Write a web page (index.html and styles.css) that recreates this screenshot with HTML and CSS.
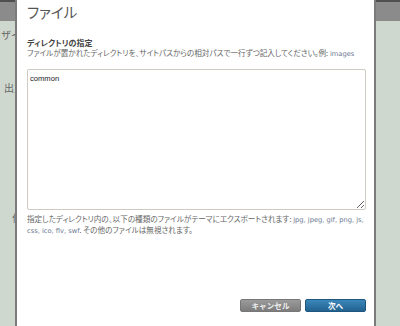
FILE: index.html
```html
<!DOCTYPE html>
<html>

<head>
    <title>ファイル</title>
    <link rel="stylesheet" href="styles.css">
</head>

<body>
    <div class="page">
        <div class="topbar"></div>
        <div class="subbar"></div>
        <div class="side">
            <p class="side-label first">ザイ</p>
            <p class="side-label second">出力</p>
            <p class="side-label third">作</p>
        </div>
    </div>

    <div class="dialog">
        <h1 class="dialog-title">ファイル</h1>

        <div class="dialog-body">
            <h2>ディレクトリの指定</h2>
            <p class="help">ファイルが置かれたディレクトリを、サイトパスからの相対パスで一行ずつ記入してください。例: <span class="code">images</span></p>
            <textarea class="dirs">common</textarea>
            <p class="note">指定したディレクトリ内の、以下の種類のファイルがテーマにエクスポートされます: <span class="code">jpg, jpeg, gif, png, js,</span><br>
                <span class="code">css, ico, flv, swf</span>. その他のファイルは無視されます。</p>
        </div>

        <div class="dialog-buttons">
            <button class="btn cancel">キャンセル</button>
            <button class="btn next">次へ</button>
        </div>
    </div>
</body>

</html>
```

FILE: styles.css
```css
body {
    margin: 0;
    font-family: "Noto Sans CJK JP", sans-serif;
    background-color: #cfd8ce;
    overflow: hidden;
}

.page {
    height: 326px;
}

.topbar {
    height: 2px;
    background-color: #4f4f4f;
}

.subbar {
    height: 19px;
    background-color: #8b8b8b;
}

.side {
    width: 15px;
    overflow: hidden;
}

.side-label {
    margin: 0;
    font-size: 10px;
    line-height: 12px;
    color: #666;
    white-space: nowrap;
}

.side-label.first {
    margin-top: 8px;
    margin-left: 1px;
}

.side-label.second {
    margin-top: 41px;
    margin-left: 4px;
}

.side-label.third {
    margin-top: 118px;
    margin-left: 12px;
}

/* overlay dialog */
.dialog {
    position: absolute;
    top: 0;
    left: 15px;
    width: 361px;
    height: 326px;
    background-color: #fff;
    border-left: 2px solid #7b7b7b;
    border-right: 2px solid #7b7b7b;
    display: flex;
    flex-direction: column;
    padding: 0 8px 14px 10px;
    box-sizing: border-box;
    font-feature-settings: "palt";
}

.dialog-title {
    margin: 0;
    padding-top: 3px;
    height: 24px;
    box-sizing: border-box;
    font-size: 14.5px;
    line-height: 18px;
    font-weight: normal;
    color: #555;
}

.dialog-body h2 {
    margin: 14px 0 0;
    font-size: 8px;
    line-height: 10px;
    font-weight: bold;
    color: #444;
}

.help {
    margin: 0;
    font-size: 7.6px;
    line-height: 10px;
    color: #666;
    white-space: nowrap;
}

.code {
    font-family: "DejaVu Sans", sans-serif;
    font-size: 6.7px;
    color: #6b7890;
}

.dirs {
    display: block;
    width: 339px;
    height: 141px;
    margin-top: 10px;
    box-sizing: border-box;
    padding: 4px 2px;
    border: 1px solid #cfcac4;
    border-radius: 2px;
    font-family: "Liberation Sans", sans-serif;
    font-size: 7.6px;
    line-height: 9px;
    color: #222;
    resize: vertical;
    outline: none;
}

.note {
    margin: 4px 0 0;
    font-size: 7.6px;
    line-height: 9px;
    color: #666;
    white-space: nowrap;
}

.dialog-buttons {
    margin-top: auto;
    display: flex;
    justify-content: flex-end;
    gap: 4px;
}

.btn {
    width: 61px;
    height: 13px;
    padding: 0;
    border-radius: 2px;
    font-family: "Noto Sans CJK JP", sans-serif;
    font-size: 7.6px;
    font-weight: bold;
    line-height: 11px;
    color: #fff;
    cursor: pointer;
}

.btn.cancel {
    background: linear-gradient(#9b9b9b, #7c7c7c);
    border: 1px solid #777;
    color: #eee;
}

.btn.next {
    background: linear-gradient(#3b87bb, #22628f);
    border: 1px solid #1d577f;
}
```
